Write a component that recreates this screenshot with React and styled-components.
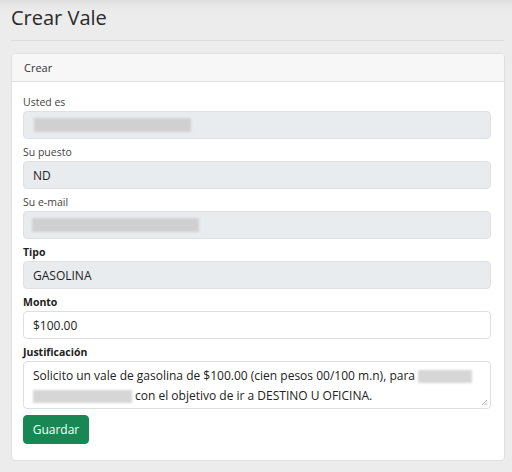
import React from "react";
import styled, { createGlobalStyle } from "styled-components";

const Global = createGlobalStyle`
  html, body {
    margin: 0;
    padding: 0;
    background: #ececec;
    font-family: "Open Sans", "Liberation Sans", sans-serif;
    color: #212529;
  }
`;

const Page = styled.div`
  min-height: 472px;
  box-sizing: border-box;
  padding: 0 8px 12px 11px;
  background: linear-gradient(#dcdcdc 0px, #e8e8e8 6px, #ececec 14px);
`;

const Title = styled.h1`
  margin: 0;
  padding-top: 4px;
  font-size: 20px;
  font-weight: 400;
  line-height: 28px;
  color: #2a2a2a;
`;

const Rule = styled.hr`
  margin: 8px 0 12px;
  border: 0;
  border-top: 1px solid #dcdcdc;
`;

const Card = styled.div`
  width: 492px;
  background: #fff;
  border: 1px solid #e0e0e0;
  border-radius: 4px;
  overflow: hidden;
`;

const CardHeader = styled.div`
  height: 27px;
  line-height: 27px;
  padding: 0 12px;
  font-size: 11px;
  background: #f7f7f7;
  border-bottom: 1px solid #e0e0e0;
  color: #333;
`;

const CardBody = styled.div`
  padding: 12px 12px 16px 11px;
`;

const Group = styled.div`
  margin-bottom: 5px;
`;

const Label = styled.div`
  font-size: 10.5px;
  line-height: 16px;
  margin-bottom: 1px;
  font-weight: ${(p) => (p.$bold ? 700 : 400)};
  color: ${(p) => (p.$bold ? "#222" : "#444")};
`;

const Field = styled.div`
  box-sizing: border-box;
  width: 468px;
  height: 28px;
  display: flex;
  align-items: center;
  padding: 0 9px;
  font-size: 12px;
  border: 1px solid ${(p) => (p.$disabled ? "#dee1e4" : "#dcdfe2")};
  border-radius: 4px;
  background: ${(p) => (p.$disabled ? "#e9ecef" : "#fff")};
  color: #222;
`;

const Area = styled.div`
  position: relative;
  box-sizing: border-box;
  width: 468px;
  height: 48px;
  padding: 4px 9px;
  font-size: 12px;
  line-height: 20px;
  border: 1px solid #dcdfe2;
  border-radius: 4px;
  background: #fff;
  color: #222;
  white-space: nowrap;
`;

const Grip = styled.svg`
  position: absolute;
  right: 2px;
  bottom: 2px;
`;

const Redacted = styled.span`
  display: inline-block;
  vertical-align: middle;
  width: ${(p) => p.$w}px;
  height: ${(p) => p.$h || 14}px;
  margin-left: ${(p) => p.$ml || 0}px;
  margin-right: ${(p) => p.$mr || 0}px;
  background: ${(p) => p.$c || "#cfd0d2"};
  filter: blur(1px);
`;

const Button = styled.button`
  margin-top: 1px;
  width: 66px;
  height: 29px;
  border: 1px solid #198754;
  border-radius: 4px;
  background: #198754;
  color: #fff;
  font-family: inherit;
  font-size: 12px;
  padding: 0;
`;

export default function App() {
  return (
    <>
      <Global />
      <Page>
        <Title>Crear Vale</Title>
        <Rule />
        <Card>
          <CardHeader>Crear</CardHeader>
          <CardBody>
            <Group>
              <Label>Usted es</Label>
              <Field $disabled>
                <Redacted $w={157} $ml={1} />
              </Field>
            </Group>
            <Group>
              <Label>Su puesto</Label>
              <Field $disabled>ND</Field>
            </Group>
            <Group>
              <Label>Su e-mail</Label>
              <Field $disabled>
                <Redacted $w={167} $ml={-1} />
              </Field>
            </Group>
            <Group>
              <Label $bold>Tipo</Label>
              <Field $disabled>GASOLINA</Field>
            </Group>
            <Group>
              <Label $bold>Monto</Label>
              <Field>$100.00</Field>
            </Group>
            <Group>
              <Label $bold>Justificación</Label>
              <Area>
                Solicito un vale de gasolina de $100.00 (cien pesos 00/100 m.n), para
                <Redacted $w={54} $h={13} $ml={3} $c="#d6d6d6" />
                <br />
                <Redacted $w={99} $h={13} $mr={3} $c="#d6d6d6" />
                con el objetivo de ir a DESTINO U OFICINA.
                <Grip width="7" height="7" viewBox="0 0 7 7">
                  <path d="M6 1 L1 6 M6 3.5 L3.5 6 M6 5.5 L5.5 6" stroke="#999" strokeWidth="0.8" />
                </Grip>
              </Area>
            </Group>
            <Button>Guardar</Button>
          </CardBody>
        </Card>
      </Page>
    </>
  );
}
